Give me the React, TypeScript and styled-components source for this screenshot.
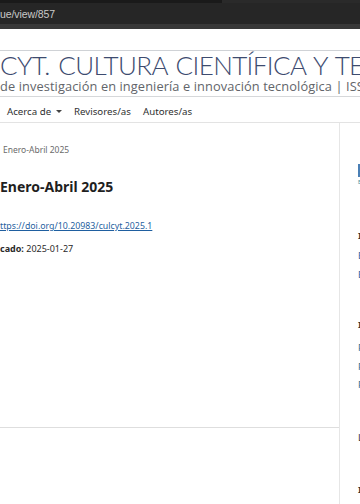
import React from "react";
import styled, { createGlobalStyle } from "styled-components";

const Global = createGlobalStyle`
  html, body { margin: 0; padding: 0; background: #ffffff; }
  body { width: 360px; height: 504px; overflow: hidden; font-family: "Noto Sans", "Open Sans", sans-serif; }
  #root { width: 360px; height: 504px; overflow: hidden; }
`;

const Page = styled.div`
  width: 360px;
  height: 504px;
  display: flex;
  flex-direction: column;
  overflow: hidden;
  background: #fff;
`;

const BrowserBar = styled.div`
  height: 29px;
  display: flex;
  flex-direction: column;
  background: #1c1c1c;
`;

const TopStrip = styled.div`
  height: 3px;
  background: linear-gradient(90deg, #1a1a1a 0 222px, #2a2a2a 222px);
`;

const Address = styled.div`
  height: 21px;
  background: #262626;
  display: flex;
  align-items: center;
  color: #c9c9c9;
  font-family: "Liberation Sans", Arial, sans-serif;
  font-size: 10.5px;
  letter-spacing: -0.1px;
  white-space: nowrap;
`;

const BottomBand = styled.div`
  height: 5px;
  background: #383838;
`;

const Banner = styled.div`
  margin-top: 21px;
  height: 45px;
  border-top: 1px solid #cfd2d6;
  border-bottom: 1px solid #d6d8da;
  display: flex;
  flex-direction: column;
  overflow: hidden;
  white-space: nowrap;
`;

const Title = styled.div`
  font-family: "Lato", "Open Sans", sans-serif;
  font-weight: 300;
  font-size: 26px;
  line-height: 26px;
  margin-top: 1px;
  color: #3d4b6f;
  letter-spacing: -0.6px;
  word-spacing: 2px;
`;

const Subtitle = styled.div`
  font-family: "Open Sans", "Noto Sans", sans-serif;
  font-size: 12.8px;
  line-height: 14px;
  margin-top: 1px;
  color: #62656a;
  letter-spacing: 0.1px;
`;

const Nav = styled.nav`
  height: 26px;
  box-sizing: border-box;
  padding-top: 3px;
  border-bottom: 1px solid #e3e3e3;
  display: flex;
  align-items: center;
  padding-left: 7px;
  font-size: 9.7px;
  color: #2f2f2f;
  white-space: nowrap;
`;

const NavItem = styled.span<{ $w: number }>`
  display: inline-flex;
  align-items: center;
  width: ${(p) => p.$w}px;
`;

const Caret = styled.span`
  display: inline-block;
  margin-left: 5px;
  border-left: 3px solid transparent;
  border-right: 3px solid transparent;
  border-top: 3px solid #444;
`;

const Body = styled.div`
  flex: 1;
  display: flex;
  min-height: 0;
`;

const Main = styled.main`
  flex: none;
  width: 339px;
  display: flex;
  flex-direction: column;
  overflow: hidden;
`;

const Content = styled.div`
  height: 304px;
  border-bottom: 1px solid #dedede;
  display: flex;
  flex-direction: column;
  white-space: nowrap;
`;

const Crumb = styled.div`
  margin-top: 21px;
  padding-left: 3px;
  font-size: 8.5px;
  line-height: 12px;
  color: #6b6b6b;
`;

const Heading = styled.h1`
  margin: 22px 0 0 0;
  font-size: 14px;
  line-height: 18px;
  font-weight: 700;
  color: #1f1f1f;
`;

const Doi = styled.a`
  margin-top: 24px;
  font-size: 8.8px;
  line-height: 12px;
  color: #1f5fa0;
  text-decoration: underline;
  text-underline-offset: 1px;
`;

const Published = styled.div`
  margin-top: 11px;
  font-size: 9px;
  line-height: 12px;
  color: #2a2a2a;
  b { font-weight: 700; }
`;

const Side = styled.aside`
  flex: none;
  box-sizing: border-box;
  width: 21px;
  border-left: 1px solid #e6e6e6;
  padding-left: 18px;
  overflow: hidden;
  white-space: nowrap;
  display: flex;
  flex-direction: column;
`;

const Logo = styled.div`
  flex: none;
  margin-top: 41px;
  width: 40px;
  height: 13px;
  background: #4a7fb5;
`;

const Caption = styled.div`
  margin-top: 2px;
  font-size: 5px;
  line-height: 6px;
  color: #3a8a9a;
`;

const Block = styled.div<{ $mt: number }>`
  margin-top: ${(p) => p.$mt}px;
  display: flex;
  flex-direction: column;
`;

const BlockTitle = styled.div<{ $light?: boolean }>`
  font-size: 9.5px;
  line-height: 12px;
  font-weight: ${(p) => (p.$light ? 400 : 700)};
  color: #333;
`;

const SideLink = styled.a<{ $c: string; $mt: number }>`
  margin-top: ${(p) => p.$mt}px;
  font-size: 9.5px;
  line-height: 12px;
  color: ${(p) => p.$c};
  text-decoration: none;
`;

export default function App() {
  return (
    <>
      <Global />
      <Page>
        <BrowserBar>
          <TopStrip />
          <Address>ue/view/857</Address>
          <BottomBand />
        </BrowserBar>
        <Banner>
          <Title>CYT. CULTURA CIENTÍFICA Y TECNOLOGÍA</Title>
          <Subtitle>de investigación en ingeniería e innovación tecnológica | ISSN</Subtitle>
        </Banner>
        <Nav>
          <NavItem $w={67}>
            Acerca de <Caret />
          </NavItem>
          <NavItem $w={69}>Revisores/as</NavItem>
          <NavItem $w={60}>Autores/as</NavItem>
        </Nav>
        <Body>
          <Main>
            <Content>
              <Crumb>Enero-Abril 2025</Crumb>
              <Heading>Enero-Abril 2025</Heading>
              <Doi href="#">ttps://doi.org/10.20983/culcyt.2025.1</Doi>
              <Published>
                <b>cado:</b> 2025-01-27
              </Published>
            </Content>
          </Main>
          <Side>
            <Logo />
            <Caption>Esta revista</Caption>
            <Block $mt={45}>
              <BlockTitle>Idioma</BlockTitle>
              <SideLink $c="#2a64a0" $mt={8}>English</SideLink>
              <SideLink $c="#2a64a0" $mt={7}>Español</SideLink>
            </Block>
            <Block $mt={38}>
              <BlockTitle>Información</BlockTitle>
              <SideLink $c="#2f6f8a" $mt={11}>Para lectores/as</SideLink>
              <SideLink $c="#2f6f8a" $mt={7}>Para autores/as</SideLink>
              <SideLink $c="#2f6f8a" $mt={6}>Para bibliotecarios/as</SideLink>
            </Block>
            <Block $mt={41}>
              <BlockTitle $light>Licencia</BlockTitle>
            </Block>
            <Block $mt={40}>
              <BlockTitle>Indexada</BlockTitle>
            </Block>
          </Side>
        </Body>
      </Page>
    </>
  );
}
